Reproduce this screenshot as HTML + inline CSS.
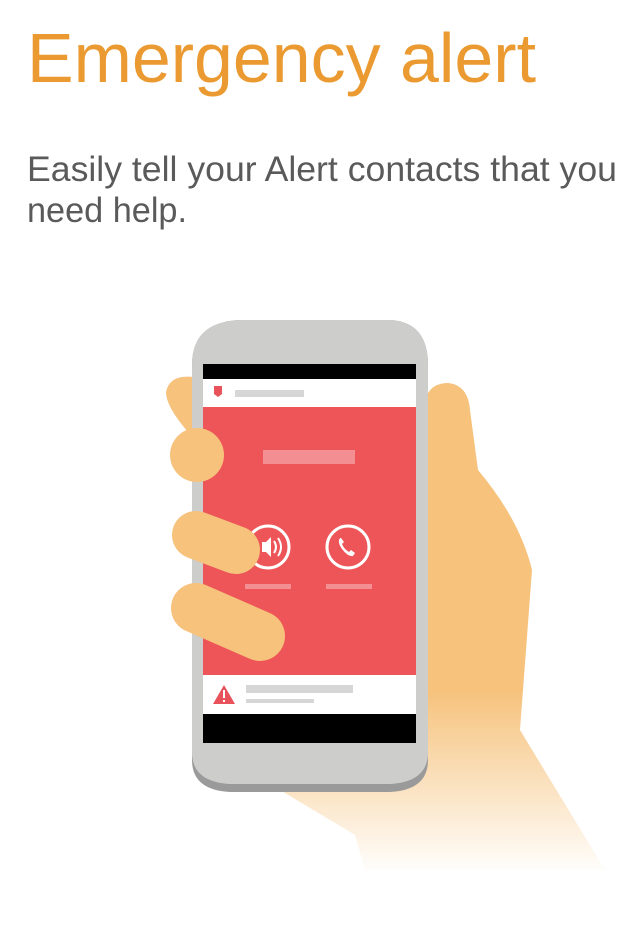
<!DOCTYPE html>
<html><head><meta charset="utf-8"><style>
html,body{margin:0;padding:0;background:#fff;width:637px;height:941px;overflow:hidden}
svg{display:block}
</style></head><body>
<svg width="637" height="941" viewBox="0 0 637 941" xmlns="http://www.w3.org/2000/svg">
<defs>
<linearGradient id="hand" gradientUnits="userSpaceOnUse" x1="0" y1="690" x2="0" y2="875">
<stop offset="0" stop-color="#f6c27c"/>
<stop offset="1" stop-color="#ffffff"/>
</linearGradient>
</defs>
<text x="27" y="82" font-family="Liberation Sans, sans-serif" font-size="70" fill="#ea9a30" textLength="509" lengthAdjust="spacingAndGlyphs">Emergency alert</text>
<text x="27" y="181" font-family="Liberation Sans, sans-serif" font-size="35" fill="#5a5a5a" textLength="590" lengthAdjust="spacingAndGlyphs">Easily tell your Alert contacts that you</text>
<text x="27" y="222" font-family="Liberation Sans, sans-serif" font-size="35" fill="#5a5a5a" textLength="160" lengthAdjust="spacingAndGlyphs">need help.</text>

<path d="M425 400 Q430 383 448 383 Q468 385 470 410 L478 470 Q520 520 532 570 L520 730 L605 870 L365 870 L355 835 L280 790 L420 780 Z" fill="url(#hand)"/>
<path d="M200 378 Q170 372 166 392 Q166 410 200 445 Z" fill="#f6c27c"/>

<path d="M192 365 Q192 322 240 320 L390 320 Q428 322 428 365 L428 760 Q428 790 390 792 L230 792 Q192 790 192 760 Z" fill="#9a9a9a"/>
<path d="M192 365 Q192 322 240 320 L390 320 Q428 322 428 365 L428 752 Q428 782 390 784 L230 784 Q192 782 192 752 Z" fill="#cdcdcc"/>
<rect x="203" y="364" width="213" height="16" fill="#000"/>
<rect x="203" y="379" width="213" height="28" fill="#fff"/>
<path d="M214 386 h8 v8 l-4 3 l-4 -3 z" fill="#e8525a"/>
<rect x="235" y="390" width="69" height="7" fill="#d6d6d6"/>
<rect x="203" y="407" width="213" height="268" fill="#ee5558"/>
<rect x="263" y="450" width="92" height="14" fill="#f38f92"/>
<circle cx="268" cy="547" r="21" fill="none" stroke="#fff" stroke-width="3"/>
<path d="M262 542 h4 l5 -5 v20 l-5 -5 h-4 z" fill="#fff"/>
<path d="M274 541 q4 6 0 12 M278 538 q6 9 0 18" fill="none" stroke="#fff" stroke-width="2"/>
<circle cx="348" cy="547" r="21" fill="none" stroke="#fff" stroke-width="3"/>
<path d="M340 538 q-3 4 2 11 q6 8 11 7 l2 -3 l-4 -3 l-2 2 q-5 -3 -7 -8 l2 -2 l-3 -4 z" fill="#fff"/>
<rect x="245" y="584" width="46" height="5" fill="#f38f92"/>
<rect x="326" y="584" width="46" height="5" fill="#f38f92"/>
<rect x="203" y="675" width="213" height="39" fill="#fff"/>
<path d="M224 685 l11 19 h-22 z" fill="#e8525a"/>
<rect x="223" y="690" width="2" height="8" fill="#fff"/><rect x="223" y="700" width="2" height="2" fill="#fff"/>
<rect x="246" y="685" width="107" height="8" fill="#d6d6d6"/>
<rect x="246" y="699" width="68" height="4" fill="#d6d6d6"/>
<rect x="203" y="714" width="213" height="29" fill="#000"/>

<circle cx="197" cy="455" r="27" fill="#f6c27c"/>
<line x1="196" y1="535" x2="236" y2="550" stroke="#f6c27c" stroke-width="48" stroke-linecap="round"/>
<line x1="196" y1="608" x2="260" y2="636" stroke="#f6c27c" stroke-width="50" stroke-linecap="round"/>
</svg>
</body></html>
